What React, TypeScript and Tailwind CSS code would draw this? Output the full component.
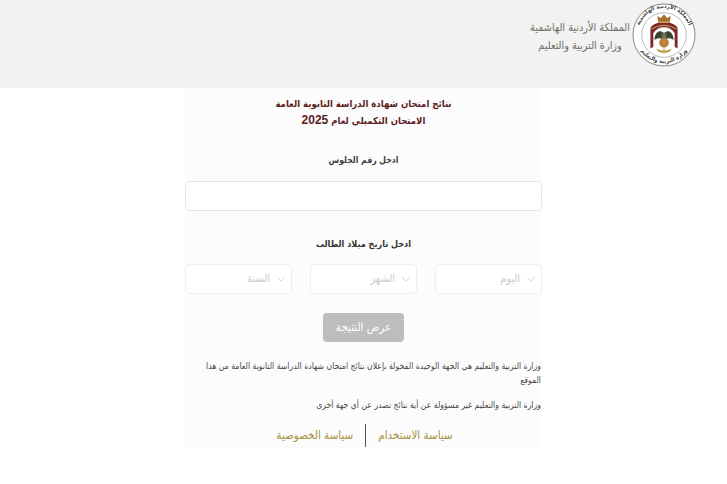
import React from "react";

function Logo() {
  return (
    <svg width="64" height="64" viewBox="0 0 66 66" className="shrink-0">
      <defs>
        <path id="ringTop" d="M7.5 41 A27 27 0 1 1 58.5 41" />
        <path id="ringBottom" d="M4 33 A29 29 0 0 0 62 33" />
      </defs>
      <circle cx="33" cy="33" r="32" fill="#fff" stroke="#666" strokeWidth="0.8" />
      <circle cx="33" cy="33" r="23" fill="#fff" stroke="#888" strokeWidth="0.6" />
      <text fontSize="6" fontWeight="700" fill="#444" fontFamily="'DejaVu Sans Condensed', 'DejaVu Sans', sans-serif" direction="rtl">
        <textPath href="#ringTop" startOffset="50%" textAnchor="middle">المملكة الأردنية الهاشمية</textPath>
      </text>
      <text fontSize="6" fontWeight="700" fill="#444" fontFamily="'DejaVu Sans Condensed', 'DejaVu Sans', sans-serif" direction="rtl">
        <textPath href="#ringBottom" startOffset="50%" textAnchor="middle">وزارة التربية والتعليم</textPath>
      </text>
      <path d="M19 47 V27 Q19 21 33 19 Q47 21 47 27 V47 L44 45 V31 Q40 25 33 25 Q26 25 22 31 V45 Z" fill="#7d2a26" />
      <path d="M20 27 Q33 19 46 27" fill="none" stroke="#c9a86a" strokeWidth="1" />
      <path d="M27.5 20 L26.5 14 L29.8 16 L33 12 L36.2 16 L39.5 14 L38.5 20 Z" fill="#a9701f" stroke="#6d4413" strokeWidth="0.4" />
      <rect x="27.5" y="19" width="11" height="1.6" fill="#c9a86a" />
      <path d="M33 31 C28 27 24 30 23 38 C26 36 29 36 31 37 Z" fill="#39432f" />
      <path d="M33 31 C38 27 42 30 43 38 C40 36 37 36 35 37 Z" fill="#39432f" />
      <path d="M30.5 31 H35.5 V36 H30.5 Z" fill="#6b6b5c" />
      <circle cx="33" cy="41" r="4.6" fill="#c2823a" stroke="#7a4d1c" strokeWidth="0.5" />
      <path d="M25 47 Q33 52 41 47 L39 50 Q33 53 27 50 Z" fill="#b8933f" />
      <path d="M33 46 L34.6 49.5 L33 52.5 L31.4 49.5 Z" fill="#d3b45c" />
    </svg>
  );
}

function Chevron() {
  return (
    <svg width="10" height="10" viewBox="0 0 24 24" fill="none" stroke="#cccccc" strokeWidth="2" className="shrink-0">
      <path d="M3 8 L12 17 L21 8" />
    </svg>
  );
}

function SelectBox({ label }: { label: string }) {
  return (
    <div className="flex h-[30px] w-[107px] items-center gap-[6px] rounded-[5px] border border-[#eeeeee] bg-white pr-[5px] text-[11px] text-[#cacaca]">
      <Chevron />
      <span>{label}</span>
    </div>
  );
}

export default function App() {
  return (
    <div dir="rtl" className="h-[484px] w-[727px] overflow-hidden bg-white font-['DejaVu_Sans_Condensed','DejaVu_Sans',sans-serif]">
      <header className="flex h-[88px] items-start gap-[2px] bg-[#f2f2f2] pr-[31px] pt-[3px]">
        <Logo />
        <div className="mt-[16px] text-center text-[10.8px] leading-[18px] text-[#6e6e62]">
          <div>المملكة الأردنية الهاشمية</div>
          <div>وزارة التربية والتعليم</div>
        </div>
      </header>
      <main className="mx-auto flex h-[360px] w-[357px] flex-col items-center bg-[#fcfcfc]">
        <h1 className="mt-[7px] text-center text-[9.5px] font-bold leading-[17px] text-[#5c1f24]">
          <div>نتائج امتحان شهادة الدراسة الثانوية العامة</div>
          <div>الامتحان التكميلي لعام <span className="font-['Liberation_Sans',sans-serif] text-[12px]">2025</span></div>
        </h1>
        <label className="mt-[22px] text-[8.6px] font-bold leading-[18px] text-[#3d3d3d]">ادخل رقم الجلوس</label>
        <div className="mt-[12px] h-[30px] w-full rounded-[5px] border border-[#e6e6e6] bg-white" />
        <label className="mt-[24px] text-[9px] font-bold leading-[18px] text-[#333]">ادخل تاريخ ميلاد الطالب</label>
        <div className="mt-[11px] flex w-full justify-between">
          <SelectBox label="اليوم" />
          <SelectBox label="الشهر" />
          <SelectBox label="السنة" />
        </div>
        <button className="mt-[19px] h-[29px] w-[81px] rounded-[4px] bg-[#bdbdbd] text-[11.5px] text-white">عرض النتيجة</button>
        <p className="mt-[17px] w-full pr-[1px] text-[8.6px] leading-[14px] text-[#444]">
          وزارة التربية والتعليم هي الجهة الوحيدة المخولة بإعلان نتائج امتحان شهادة الدراسة الثانوية العامة من هذا الموقع
        </p>
        <p className="mt-[11px] w-full pr-[1px] text-[8.6px] leading-[14px] text-[#444]">
          وزارة التربية والتعليم غير مسؤولة عن أية نتائج تصدر عن أي جهة أخرى
        </p>
        <div className="mr-[-2px] mt-[12px] flex h-[23px] items-center text-[11.5px] text-[#a58f3d]">
          <span className="px-[12px]">سياسة الاستخدام</span>
          <span className="h-[23px] w-[1px] bg-[#555]" />
          <span className="px-[12px]">سياسة الخصوصية</span>
        </div>
      </main>
    </div>
  );
}
